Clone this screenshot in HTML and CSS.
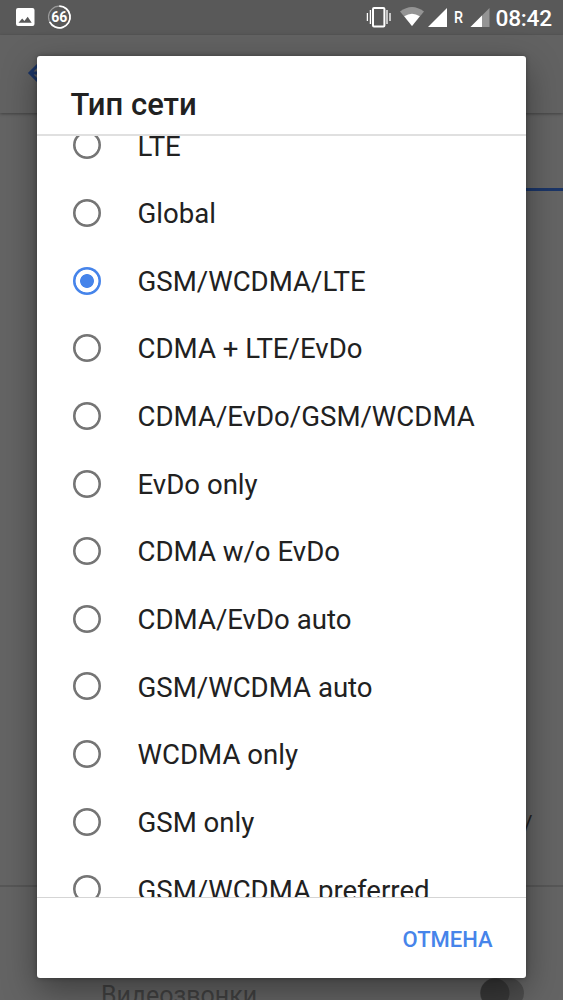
FILE: index.html
```html
<!DOCTYPE html>
<html lang="ru">
<head>
<meta charset="utf-8">
<title>Тип сети</title>
<link rel="stylesheet" href="styles.css">
</head>
<body>
<div class="screen">
  <header class="status">
    <svg class="status-left" width="80" height="34" viewBox="0 0 80 34">
      <path fill="#fff" fill-rule="evenodd" d="M18 8h14.5a2 2 0 0 1 2 2v14a2 2 0 0 1-2 2H18a2 2 0 0 1-2-2V10a2 2 0 0 1 2-2zM18.5 22.8h13.2l-4-6-3.3 4.1-2.2-2.5z"/>
      <circle cx="59.3" cy="17" r="10.8" fill="none" stroke="#999" stroke-width="1.2"/>
      <path d="M59.3 6.2a10.8 10.8 0 1 1-9.6 15.7" fill="none" stroke="#fff" stroke-width="1.8"/>
      <text class="battery" x="59.3" y="22" text-anchor="middle">66</text>
    </svg>
    <svg class="status-right" width="130" height="34" viewBox="362 0 130 34">
      <g fill="none" stroke="#fff">
        <rect x="373" y="8" width="11.4" height="18.4" rx="1" stroke-width="2"/>
        <path d="M370.4 10v14M367.4 13v8M387 10v14M390 13v8" stroke-width="1.3"/>
      </g>
      <path fill="#949494" d="M400 11.5q12-9 24 0L412 26z"/>
      <path fill="#fff" d="M404.2 16.3q7.8-5.2 15.6 0L412 26z"/>
      <path fill="#fff" d="M447 8v19h-19z"/>
      <text class="roaming" x="454" y="23" textLength="9" lengthAdjust="spacingAndGlyphs">R</text>
      <path fill="#949494" d="M489.5 8v19h-19z"/>
      <path fill="#fff" d="M482 15.5V27h-11.5z"/>
    </svg>
    <time class="clock">08:42</time>
  </header>
  <div class="toolbar">
    <svg width="32" height="24" viewBox="0 0 32 24"><path d="M13 3L4 12l9 9M5 12h24" fill="none" stroke="#1b3567" stroke-width="3"/></svg>
  </div>
  <div class="tabs"><div class="tab"></div><div class="tab active"></div></div>
  <div class="content"><span class="hint">/</span></div>
  <div class="video"><span>Видеозвонки</span><i class="switch"></i></div>

  <section class="dialog" role="dialog">
    <h1 class="title">Тип сети</h1>
    <div class="viewport">
      <ul class="options">
        <li><i class="radio"></i><span>LTE</span></li>
        <li><i class="radio"></i><span>Global</span></li>
        <li><i class="radio on"></i><span>GSM/WCDMA/LTE</span></li>
        <li><i class="radio"></i><span>CDMA + LTE/EvDo</span></li>
        <li><i class="radio"></i><span>CDMA/EvDo/GSM/WCDMA</span></li>
        <li><i class="radio"></i><span>EvDo only</span></li>
        <li><i class="radio"></i><span>CDMA w/o EvDo</span></li>
        <li><i class="radio"></i><span>CDMA/EvDo auto</span></li>
        <li><i class="radio"></i><span>GSM/WCDMA auto</span></li>
        <li><i class="radio"></i><span>WCDMA only</span></li>
        <li><i class="radio"></i><span>GSM only</span></li>
        <li><i class="radio"></i><span>GSM/WCDMA preferred</span></li>
      </ul>
    </div>
    <footer class="actions"><span class="cancel">ОТМЕНА</span></footer>
  </section>
</div>
</body>
</html>
```
FILE: styles.css
```css
* { box-sizing: border-box; }
body { margin: 0; font-family: Roboto, "Noto Sans", sans-serif; }
.screen {
  position: relative;
  display: flex;
  flex-direction: column;
  width: 563px;
  height: 1000px;
  overflow: hidden;
  background: #646464;
}
.status { display: flex; height: 35px; flex: none; background: #595959; }
.status-right { margin-left: auto; }
.status svg { flex: none; }
.battery { font-size: 14px; font-weight: 700; fill: #fff; }
.roaming { font-size: 16.5px; font-weight: 500; fill: #fff; }
.clock {
  width: 71px;
  padding-left: 3.5px;
  font-size: 22.7px;
  line-height: 37px;
  letter-spacing: -.25px;
  font-weight: 500;
  color: #fff;
}
.toolbar {
  height: 78px;
  flex: none;
  padding: 26px 0 0 26px;
  background: #626262;
  box-shadow: 0 1px 3px rgba(0, 0, 0, .35);
}
.tabs { display: flex; height: 78px; flex: none; }
.tab { flex: 1; }
.tab.active { border-bottom: 3px solid #1b3567; }
.content {
  display: flex;
  justify-content: flex-end;
  align-items: flex-end;
  height: 696px;
  flex: none;
  padding: 0 30.5px 48px 0;
  border-bottom: 2px solid #575757;
}
.hint { font-size: 22px; line-height: 26px; color: #222; }
.video {
  display: flex;
  justify-content: space-between;
  height: 113px;
  padding: 93px 39px 0 101px;
  font-size: 25px;
  line-height: 32px;
  color: #414141;
}
.switch {
  display: block;
  width: 44px;
  height: 30px;
  margin-top: -2px;
  border-radius: 15px;
  background: radial-gradient(circle at 15px 15px, #383838 14px, #4d4d4d 15px);
}
.dialog {
  position: absolute;
  left: 36.5px;
  top: 56px;
  display: flex;
  flex-direction: column;
  width: 489.7px;
  height: 921.5px;
  border-radius: 3px;
  background: #fff;
  box-shadow: 0 12px 34px rgba(0, 0, 0, .4), 0 0 5px rgba(0, 0, 0, .3);
  overflow: hidden;
}
.title {
  height: 78px;
  flex: none;
  margin: 0;
  padding: 31px 0 0 34px;
  font-size: 31px;
  line-height: 36px;
  font-weight: 500;
  color: #212121;
}
.viewport {
  height: 764px;
  flex: none;
  overflow: hidden;
  border-top: 2px solid #e0e0e0;
  border-bottom: 1.5px solid #d5d5d5;
}
.options { margin: -24.5px 0 0; padding: 0; list-style: none; }
.options li {
  display: flex;
  align-items: center;
  height: 67.65px;
  padding-left: 36.5px;
  font-size: 27.6px;
  color: #212121;
  white-space: nowrap;
}
.options span { padding-top: 1.4px; }
.radio {
  width: 28px;
  height: 28px;
  flex: none;
  margin-right: 36.5px;
  border-radius: 50%;
  background: radial-gradient(circle, transparent 11px, #757575 11.8px);
}
.radio.on {
  background: radial-gradient(circle, #4684ea 6.5px, transparent 7.3px 11px, #4684ea 11.8px);
}
.actions {
  display: flex;
  flex: 1;
  align-items: center;
  justify-content: flex-end;
  padding: 3px 33.5px 0 0;
}
.cancel { font-size: 22px; font-weight: 500; color: #4684ea; }
```
